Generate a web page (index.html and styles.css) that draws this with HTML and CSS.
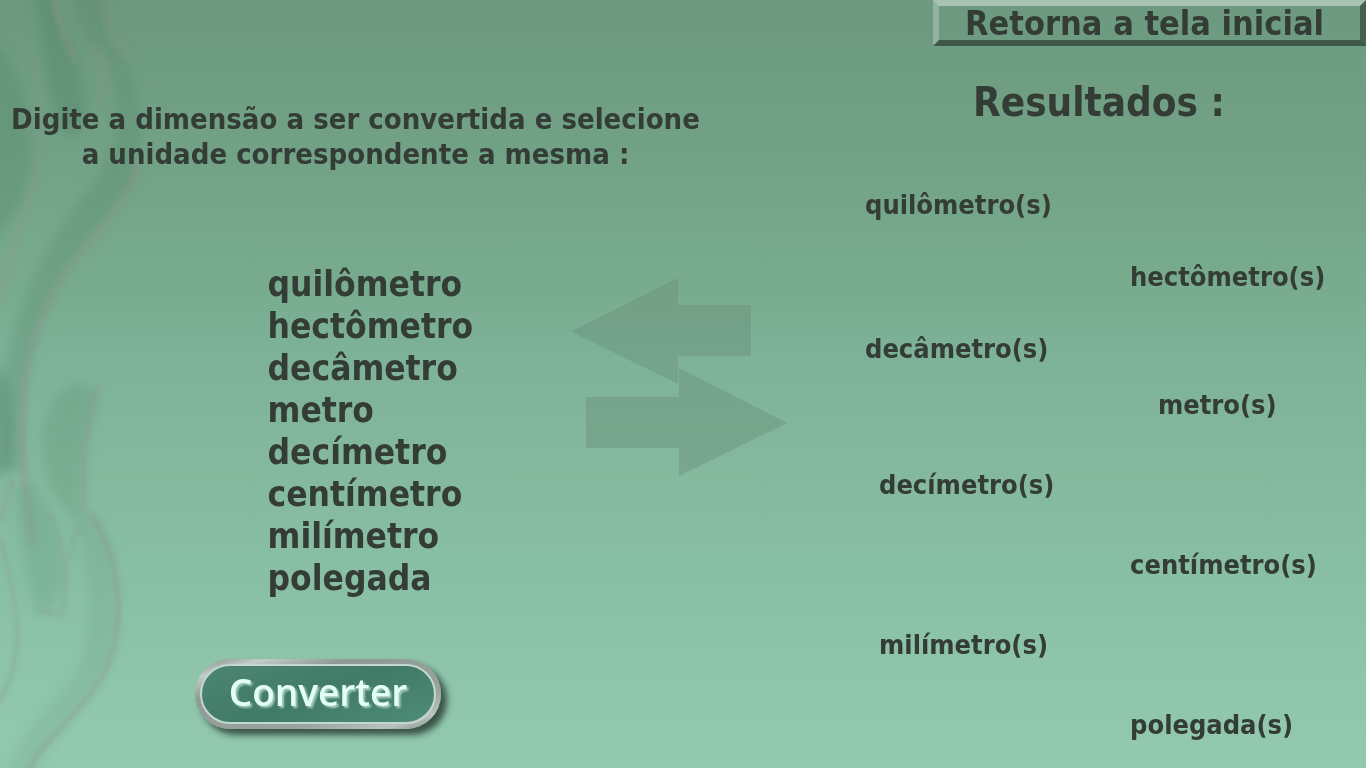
FILE: index.html
```html
<!DOCTYPE html>
<html lang="pt-BR">
<head>
<meta charset="utf-8">
<title>Conversor de medidas</title>
<link rel="stylesheet" href="styles.css">
</head>
<body>
<svg class="smoke" width="220" height="768" viewBox="0 0 220 768" aria-hidden="true">
  <defs>
    <filter id="soft" x="-20%" y="-10%" width="140%" height="120%"><feGaussianBlur stdDeviation="6"/></filter>
    <filter id="fine" x="-20%" y="-10%" width="140%" height="120%"><feGaussianBlur stdDeviation="2"/></filter>
  </defs>
  <g fill="#4f8266" filter="url(#soft)">
    <path opacity=".4" d="M34 -10 C42 40 46 80 56 120 C66 145 80 142 86 118 C84 80 78 50 62 22 L52 -10Z"/>
    <path opacity=".28" d="M70 -10 C78 30 88 50 104 58 C118 70 118 100 118 125 C112 165 82 195 62 225 C38 262 18 310 8 352 L0 380 L0 470 L24 470 C18 400 30 340 52 295 C72 250 110 220 134 180 C148 130 138 70 108 34 L106 -10Z"/>
    <path opacity=".3" d="M-10 40 C22 60 30 110 32 160 C28 200 12 220 -10 245Z"/>
    <path opacity=".35" d="M-10 365 C12 370 16 420 12 470 L-10 480Z"/>
    <path opacity=".2" d="M82 380 C52 390 40 415 41 450 C46 490 60 510 78 522 C84 470 84 425 98 395Z"/>
    <path opacity=".18" d="M14 490 C22 545 26 590 38 612 C52 616 60 600 64 580 C62 540 52 505 30 480Z"/>
    <path opacity=".14" d="M72 520 C90 560 94 620 80 665 C60 705 22 720 4 778 L30 778 C50 730 100 690 112 650 C124 600 114 540 90 508Z"/>
  </g>
  <g fill="none" stroke="#8b948b" stroke-linecap="round" filter="url(#fine)">
    <path opacity=".35" stroke-width="8" d="M53 -5 C60 30 68 44 74 60"/>
    <path opacity=".18" stroke-width="14" d="M96 48 C106 62 104 84 100 100 M106 -5 C106 25 116 40 126 55"/>
    <path opacity=".35" stroke-width="8" d="M138 165 C132 200 94 235 72 264 C42 305 24 355 23 410 C20 470 30 510 31 540"/>
    <path opacity=".22" stroke-width="9" d="M35 60 C42 110 42 160 30 195 C20 230 6 260 2 300"/>
    <path opacity=".35" stroke-width="5" d="M99 388 C84 425 83 465 83 512 M12 480 L0 520"/>
    <path opacity=".35" stroke-width="4" d="M0 540 C10 570 17 610 17 640 C14 680 4 690 0 702"/>
    <path opacity=".32" stroke-width="4" d="M50 515 C62 540 70 570 62 616 C54 614 48 610 38 611 M70 558 C72 536 76 528 82 530"/>
    <path opacity=".38" stroke-width="5" d="M92 515 C112 545 120 580 118 622 C114 680 80 704 60 730 C44 746 34 758 28 772"/>
  </g>
</svg>

<header class="topbar">
  <a class="home-link" href="#inicio">Retorna a tela inicial</a>
</header>

<main class="converter">
  <section class="source">
    <h1 class="intro">Digite a dimensão a ser convertida e selecione<br>a unidade correspondente a mesma :</h1>
    <div class="picker">
      <ul class="units">
        <li>quilômetro</li>
        <li>hectômetro</li>
        <li>decâmetro</li>
        <li>metro</li>
        <li>decímetro</li>
        <li>centímetro</li>
        <li>milímetro</li>
        <li>polegada</li>
      </ul>
      <svg class="arrows" width="216" height="200" viewBox="0 0 216 200" aria-hidden="true">
        <path d="M0 53.500 L107 0 V27 H180 V78 H107 V106Z"/>
        <path d="M15 119 H108 V90 L216 145 L108 198 V170 H15Z"/>
      </svg>
    </div>
    <button class="convert" type="button"><span class="convert-face">Converter</span></button>
  </section>

  <section class="results">
    <h2 class="results-title">Resultados :</h2>
    <ul class="result-list">
      <li>quilômetro(s)</li>
      <li class="far">hectômetro(s)</li>
      <li>decâmetro(s)</li>
      <li class="far close inset-wide">metro(s)</li>
      <li class="apart inset">decímetro(s)</li>
      <li class="far apart">centímetro(s)</li>
      <li class="apart inset">milímetro(s)</li>
      <li class="far apart">polegada(s)</li>
    </ul>
  </section>
</main>
</body>
</html>
```
FILE: styles.css
```css
* {
  box-sizing: border-box;
}

body {
  margin: 0;
  min-height: 100vh;
  position: relative;
  overflow-x: hidden;
  background: linear-gradient(#6c997f 0%, #72a286 20%, #79ac8f 38%, #7db298 46%, #84b99e 62%, #8bc2a8 82%, #92c9af 100%);
  color: #343c36;
  font-family: "DejaVu Sans Condensed", "DejaVu Sans", Tahoma, sans-serif;
  font-stretch: condensed;
  font-weight: bold;
}

ul {
  margin: 0;
  padding: 0;
  list-style: none;
}

.smoke {
  position: absolute;
  top: 0;
  left: 0;
  z-index: -1;
}

.topbar {
  display: flex;
  justify-content: flex-end;
}

.home-link {
  padding: 0 36px 0 26px;
  border: 6px solid;
  border-color: #a9c4b4 #45604f #405849 #92b3a0;
  color: inherit;
  font-size: 34px;
  line-height: 34px;
  text-decoration: none;
}

.converter {
  display: grid;
  grid-template-columns: 787fr 579fr;
}

.source {
  padding-top: 56px;
}

.intro {
  margin: 0;
  padding-right: 76px;
  font-size: 29px;
  line-height: 35px;
  text-align: center;
  white-space: nowrap;
}

.picker {
  display: flex;
  justify-content: space-between;
  padding: 91px 0 0 34%;
}

.units {
  font-size: 35px;
  line-height: 42px;
}

.arrows {
  margin-top: 15px;
  fill: #6b9179;
  fill-opacity: .45;
}

.convert {
  display: block;
  width: 246px;
  height: 70px;
  margin: 60px 0 0 195px;
  padding: 5px;
  border: 0;
  border-radius: 35px;
  background: linear-gradient(165deg, #7f8a84 0%, #c3ccc7 14%, #8f9a95 30%, #98a39e 70%, #b9c2be 88%, #7e8883 100%);
  box-shadow: 6px 6px 6px #24382fcc;
}

.convert-face {
  display: flex;
  align-items: center;
  justify-content: center;
  height: 100%;
  padding-bottom: 4px;
  border: 2px solid #c3d8ce;
  border-radius: 30px;
  background: linear-gradient(160deg, #4c8571, #417a67 50%, #4e8d77);
  color: #e2fff3;
  font-family: "Open Sans", "Noto Sans", sans-serif;
  font-stretch: normal;
  font-size: 37px;
  font-weight: 600;
  line-height: 48px;
  text-shadow: 2px 2px 2px #a5cbbb;
}

.results {
  padding: 32px 36px 24px 78px;
}

.results-title {
  margin: 0;
  padding-left: 108px;
  font-size: 40px;
  line-height: 48px;
}

.result-list {
  display: flex;
  flex-direction: column;
  padding-top: 63px;
  font-size: 27px;
  line-height: 32px;
}

.result-list li + li {
  margin-top: 40px;
}

.result-list li.close {
  margin-top: 24px;
}

.result-list li.apart {
  margin-top: 48px;
}

.far {
  padding-left: 57%;
}

.inset {
  padding-left: 14px;
}

.inset-wide {
  padding-left: 63%;
}
```
